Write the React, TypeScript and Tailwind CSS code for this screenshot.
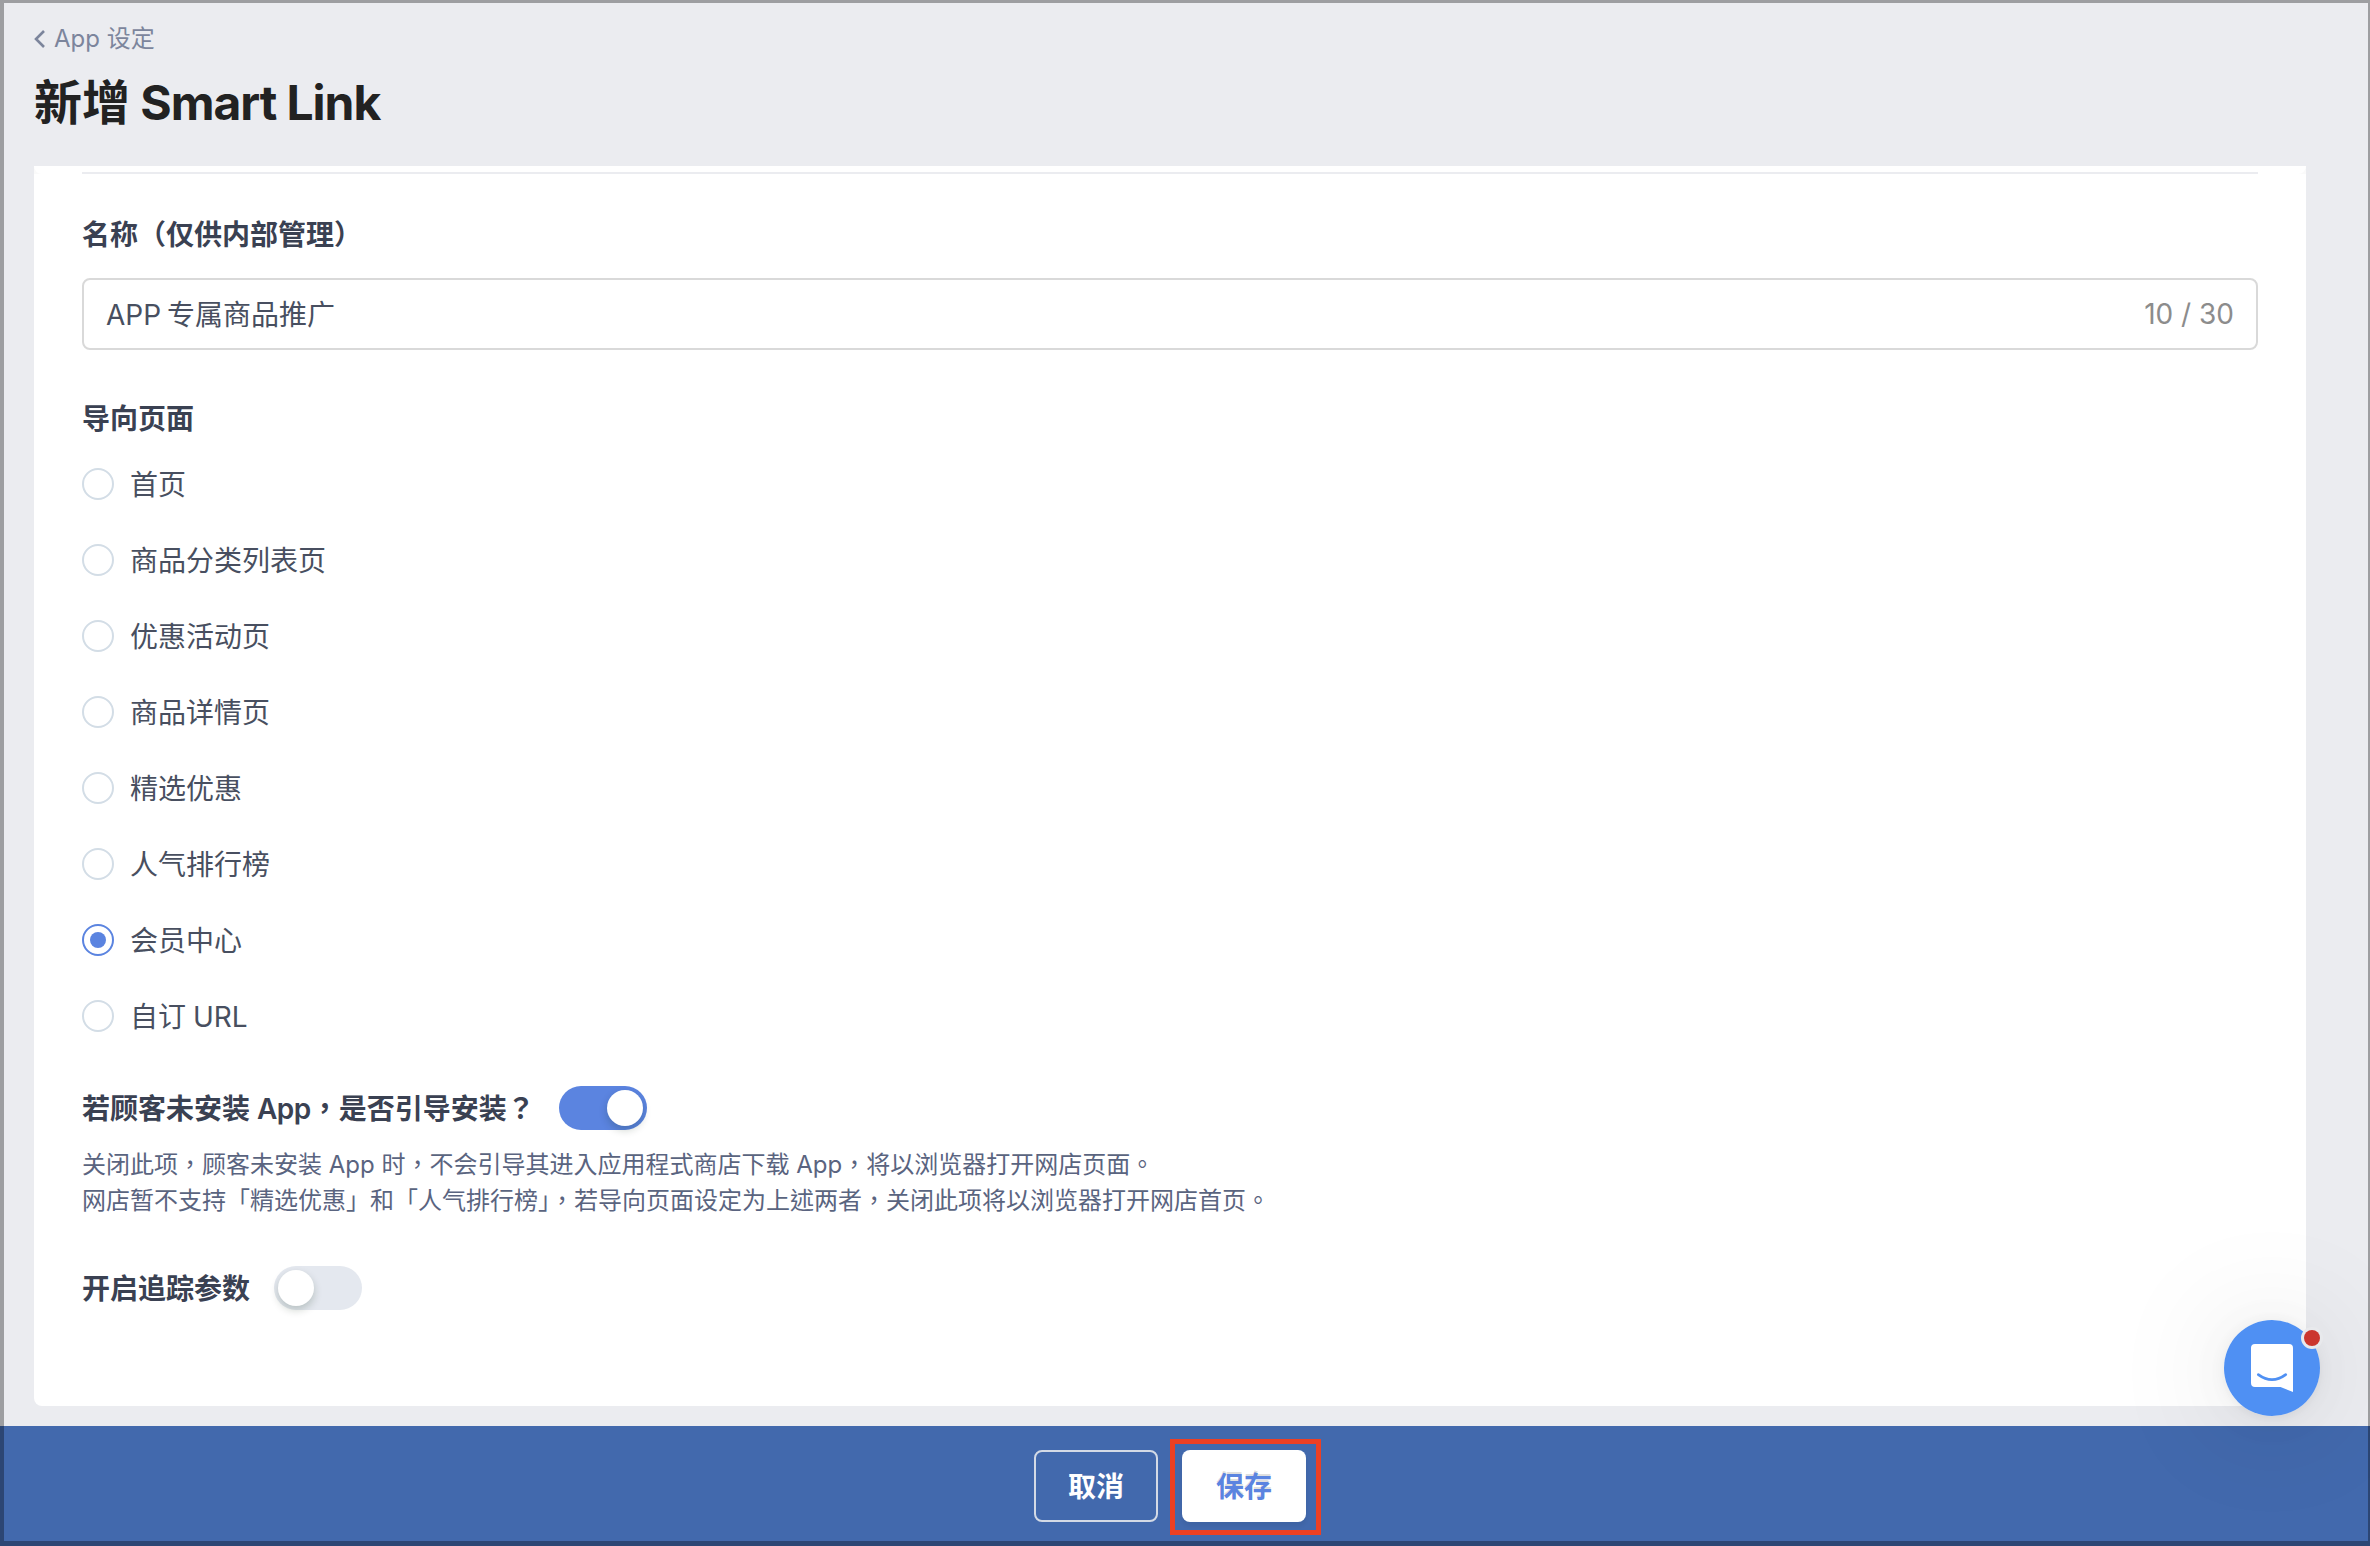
import React, { useState } from 'react'
import clsx from 'clsx'

const PAGES = [
  '首页',
  '商品分类列表页',
  '优惠活动页',
  '商品详情页',
  '精选优惠',
  '人气排行榜',
  '会员中心',
  '自订 URL',
]

const MAX_NAME_LENGTH = 30

const Radio = ({
  label,
  checked,
  onSelect,
}: {
  label: string
  checked: boolean
  onSelect: () => void
}) => (
  <label className="flex h-8 cursor-pointer items-center gap-4">
    <input type="radio" name="page" className="sr-only" checked={checked} onChange={onSelect} />
    <span
      className={clsx(
        'flex size-8 items-center justify-center rounded-full border-2',
        checked ? 'border-[#5b84e0]' : 'border-[#d3dde6]',
      )}
    >
      {checked && <span className="size-4 rounded-full bg-[#5b84e0]" />}
    </span>
    <span className="pt-0.5 text-[28px] leading-8 [word-spacing:-1px] text-[#484f60]">{label}</span>
  </label>
)

const Toggle = ({ on, onToggle }: { on: boolean; onToggle: () => void }) => (
  <button
    type="button"
    role="switch"
    aria-checked={on}
    onClick={onToggle}
    className={clsx(
      'flex h-11 w-[88px] items-center rounded-full p-1',
      on ? 'justify-end bg-[#5b84e0]' : 'justify-start bg-[#e4e8ef]',
    )}
  >
    <span className="size-9 rounded-full bg-white shadow-[0_4px_8px_rgba(0,35,11,0.2)]" />
  </button>
)

const ChatLauncher = () => (
  <div className="absolute top-[1320px] left-[2224px] size-24 rounded-full shadow-[0_2px_12px_rgba(0,0,0,0.06),0_4px_48px_rgba(0,0,0,0.03),0_4px_124px_rgba(0,0,0,0.13)]">
    <svg viewBox="0 0 96 96" className="size-24 overflow-visible">
      <circle cx="48" cy="48" r="48" fill="#4f90f3" />
      <path
        d="M31 24h34a4 4 0 0 1 4 4v44l-12.500-5H31a4 4 0 0 1-4-4V28a4 4 0 0 1 4-4Z"
        fill="#fff"
      />
      <path
        d="M34.300 54.600q13.700 10 27.400 0"
        fill="none"
        stroke="#4f90f3"
        strokeWidth="2.700"
        strokeLinecap="round"
      />
      <circle cx="88" cy="18" r="11" fill="#e8e9ec" />
      <circle cx="88" cy="18" r="8" fill="#cb362e" />
    </svg>
  </div>
)

const App = () => {
  const [name, setName] = useState('APP 专属商品推广')
  const [page, setPage] = useState('会员中心')
  const [guideInstall, setGuideInstall] = useState(true)
  const [tracking, setTracking] = useState(false)

  return (
    <div
      lang="zh-Hans"
      className="relative flex h-[1546px] w-[2370px] flex-col overflow-hidden bg-[#ebecf0] font-['Inter','Noto_Sans_CJK_SC',sans-serif]"
    >
      <header className="h-[166px] shrink-0 pl-[34px]">
        <a className="flex h-10 items-center gap-[9px] pt-[37px] text-[24px] text-[#7c859c]">
          <svg viewBox="0 0 11 18" className="h-[18px] w-[11px]" fill="none" stroke="currentColor" strokeWidth="2.600">
            <path d="M10 1 2 9l8 8" />
          </svg>
          <span>App 设定</span>
        </a>
        <h1 className="mt-[33px] text-[48px] leading-[60px] font-bold text-[#222]">
          新增<span className="tracking-[-0.022em]"> Smart Link</span>
        </h1>
      </header>

      {/* form card */}
      <main className="mr-16 ml-[34px] h-[1240px] shrink-0 overflow-hidden rounded-b-lg bg-white">
        <div className="h-2 bg-[#fafafa]">
          <div className="h-2 rounded-b-lg bg-white px-12 pt-1.5">
            <div className="h-0.5 bg-[#ebecf0]" />
          </div>
        </div>

        <div className="px-12 pt-[41px]">
          <h2 className="h-10 text-[28px] leading-10 font-semibold text-[#3a4152]">名称（仅供内部管理）</h2>
          <div className="mt-[23px] flex h-[72px] items-center rounded-lg border-2 border-[#d9d9d9] px-[22px] text-[28px]">
            <input
              value={name}
              maxLength={MAX_NAME_LENGTH}
              onChange={(e) => setName(e.target.value)}
              className="flex-1 pt-px text-[#484f60] outline-none [word-spacing:-2px]"
            />
            <span className="text-[#8c8c8c]">
              {name.length} / {MAX_NAME_LENGTH}
            </span>
          </div>

          <h2 className="mt-[49px] h-10 text-[28px] leading-10 font-semibold text-[#3a4152]">导向页面</h2>
          <div className="mt-[29px] flex flex-col gap-11">
            {PAGES.map((item) => (
              <Radio key={item} label={item} checked={page === item} onSelect={() => setPage(item)} />
            ))}
          </div>

          <div className="mt-[54px] flex h-11 items-center font-['Inter','Noto_Sans_CJK_TC',sans-serif]">
            <h2
              lang="zh-Hant"
              className="w-[477px] pt-px text-[28px] font-semibold whitespace-nowrap text-[#3a4152]"
            >
              若顾客未安装 <span className="tracking-[-0.02em]">App</span>，是否引导安装？
            </h2>
            <Toggle on={guideInstall} onToggle={() => setGuideInstall(!guideInstall)} />
          </div>
          <p
            lang="zh-Hant"
            className="mt-[17px] font-['Inter','Noto_Sans_CJK_TC',sans-serif] text-[24px] leading-9 text-[#5a6480]"
          >
            关闭此项，顾客未安装 App 时，不会引导其进入应用程式商店下载 App，将以浏览器打开网店页面。
            <br />
            网店暂不支持「精选优惠」和「人气排行榜」，若导向页面设定为上述两者，关闭此项将以浏览器打开网店首页。
          </p>

          <div className="mt-[47px] flex h-11 items-center">
            <h2 className="w-48 pt-px text-[28px] font-semibold text-[#3a4152]">开启追踪参数</h2>
            <Toggle on={tracking} onToggle={() => setTracking(!tracking)} />
          </div>
        </div>
      </main>

      <footer className="mt-5 flex h-[120px] shrink-0 items-start bg-[#4269ad] pt-[13px] pl-[1034px] text-[28px] font-semibold">
        <button type="button" className="mt-[11px] h-[72px] w-[124px] rounded-lg border-2 border-[#d3dae6] pt-px text-white">
          取消
        </button>
        <div className="ml-3 h-24 w-[151px] border-[5px] border-[#ec4024] pt-1.5 pl-[7px]">
          <button
            type="button"
            className="h-[72px] w-[124px] rounded-lg bg-white pt-px text-[#5b84e0] shadow-[0_4px_4px_rgba(0,0,0,0.06)] [text-shadow:0_-2px_0_rgba(0,0,0,0.12)]"
          >
            保存
          </button>
        </div>
      </footer>

      <ChatLauncher />

      {/* window edge */}
      <div className="pointer-events-none absolute inset-0 border-t-[3px] border-r-2 border-b-[5px] border-l-4 border-black/[0.33]" />
    </div>
  )
}

export default App
